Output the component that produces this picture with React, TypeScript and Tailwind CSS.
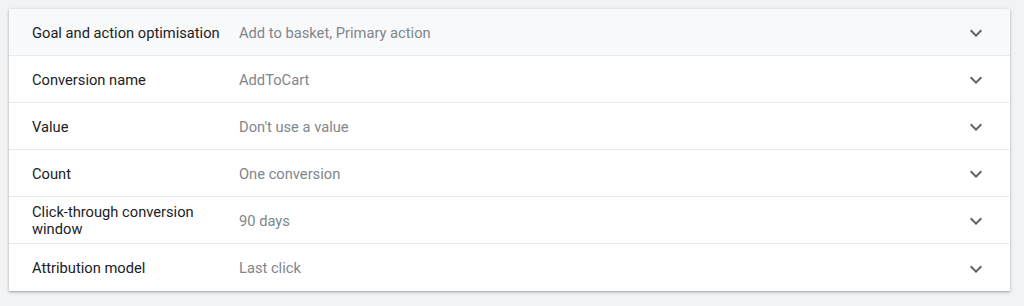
const rows = [
  { label: 'Goal and action optimisation', value: 'Add to basket, Primary action' },
  { label: 'Conversion name', value: 'AddToCart' },
  { label: 'Value', value: "Don't use a value" },
  { label: 'Count', value: 'One conversion' },
  { label: 'Click-through conversion window', value: '90 days' },
  { label: 'Attribution model', value: 'Last click' },
];

function ExpandMore() {
  return (
    <svg viewBox="0 0 24 24" className="w-6 h-6 fill-[#5f6368]">
      <path d="M16.59 8.59L12 13.17 7.41 8.59 6 10l6 6 6-6z" />
    </svg>
  );
}

export default function App() {
  return (
    <div className="w-[1024px] h-[306px] bg-[#f1f3f4] pt-[9px] pl-[9px] font-['Roboto',sans-serif]">
      <div className="w-[1001px] bg-white shadow-[0_1px_3px_rgba(60,64,67,0.35),0_1px_1px_rgba(60,64,67,0.15)]">
        {rows.map((row, i) => (
          <div
            key={row.label}
            className={`flex items-center h-[47px] pl-[23px] pr-[22px] pt-[2px] ${i === 0 ? 'bg-[#f8f9fa]' : ''} ${i < rows.length - 1 ? 'border-b border-[#e8eaed]' : ''}`}
          >
            <div className="w-[207px] pr-[12px] text-[14.7px] leading-[17px] text-[#202124]">{row.label}</div>
            <div className="flex-1 text-[14.7px] text-[#80868b]">{row.value}</div>
            <ExpandMore />
          </div>
        ))}
      </div>
    </div>
  );
}
